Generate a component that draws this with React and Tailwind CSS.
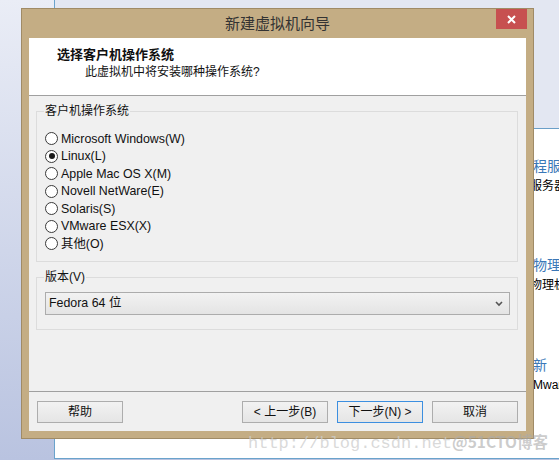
import React from 'react'

const OS_OPTIONS = [
  { label: 'Microsoft Windows(W)' },
  { label: 'Linux(L)', checked: true },
  { label: 'Apple Mac OS X(M)' },
  { label: 'Novell NetWare(E)' },
  { label: 'Solaris(S)' },
  { label: 'VMware ESX(X)' },
  { label: '其他(O)' },
]

function Radio({ label, checked }) {
  return (
    <div className="flex h-[17.5px] items-center">
      <span className="flex h-[13px] w-[13px] items-center justify-center rounded-full border border-[#3a3a3a] bg-white">
        {checked && <span className="h-[6px] w-[6px] rounded-full bg-[#1a1a1a]" />}
      </span>
      <span className="ml-[3px] text-[12.4px] leading-[14px] text-[#111]">{label}</span>
    </div>
  )
}

function GroupBox({ title, className, children }) {
  return (
    <div className={`relative mx-[7px] w-[482px] border border-[#dcdcdc] ${className}`}>
      <span className="absolute -top-[8px] left-[7px] bg-[#f0f0f0] px-[1px] text-[12px] leading-[14px] text-[#111]">
        {title}
      </span>
      {children}
    </div>
  )
}

function Button({ children, primary }) {
  return (
    <button
      type="button"
      className={`flex h-[22px] w-[86px] items-center justify-center border bg-gradient-to-b from-[#f2f2f2] to-[#e5e5e5] text-[12px] text-[#111] ${
        primary ? 'border-[#3c8fe0]' : 'border-[#adadad]'
      }`}
    >
      {children}
    </button>
  )
}

export default function App() {
  return (
    <div className="relative h-[460px] w-[559px] overflow-hidden bg-gradient-to-b from-[#eaedf6] to-[#b9c3e0] font-['Liberation_Sans','Noto_Sans_CJK_SC',sans-serif]">
      {/* web page behind the dialog */}
      <div className="absolute bottom-[1px] left-[54px] right-0 top-0 flex flex-col border-b border-l border-[#6aa3cc] bg-white">
        <div className="h-[129px] shrink-0 border-b border-[#6a9fc8] bg-[#e3e7f2]" />
        <div className="flex flex-col pl-[464px] whitespace-nowrap">
          <p className="mt-[27px] text-[14px] leading-[20px] text-[#3a78b8]">远程服务</p>
          <p className="-ml-[1px] text-[12px] leading-[20px] text-black">的服务器</p>
          <p className="mt-[59px] text-[14px] leading-[20px] text-[#3a78b8]">用物理机</p>
          <p className="-ml-[1px] text-[12px] leading-[20px] text-black">用物理机</p>
          <p className="mt-[60px] text-[14px] leading-[20px] text-[#3a78b8]">最新</p>
          <p className="ml-[6px] text-[12px] leading-[20px] text-black">VMware</p>
        </div>
      </div>

      {/* wizard dialog */}
      <div className="absolute left-[21px] top-[8px] flex h-[431px] w-[513px] flex-col border border-[#a08b66] bg-[#c4ad84] px-[7px] pb-[7px] pt-[29px]">
        <div className="absolute left-0 right-0 top-0 flex h-[29px] items-center justify-center font-['Noto_Sans_CJK_SC',sans-serif] text-[15px] text-[#333]">
          新建虚拟机向导
        </div>
        <div className="absolute right-[6px] top-0 flex h-[20px] w-[31px] items-center justify-center bg-[#c75050]">
          <svg width="9" height="9" viewBox="0 0 9 9">
            <path d="M1 1L8 8M8 1L1 8" stroke="white" strokeWidth="2" />
          </svg>
        </div>

        <div className="flex flex-1 flex-col bg-[#f0f0f0]">
          <div className="h-[57px] bg-white pl-[28px] pt-[7px]">
            <p className="font-['Noto_Sans_CJK_SC',sans-serif] text-[13px] font-bold leading-[18px] text-[#111]">
              选择客户机操作系统
            </p>
            <p className="pl-[28px] text-[12px] leading-[18px] text-[#111]">此虚拟机中将安装哪种操作系统?</p>
          </div>
          <div className="h-[1px] bg-[#a0a0a0]" />

          <div className="flex-1">
            <GroupBox title="客户机操作系统" className="mt-[15px] h-[151px] pl-[8px] pt-[18px]">
              {OS_OPTIONS.map((option) => (
                <Radio key={option.label} label={option.label} checked={option.checked} />
              ))}
            </GroupBox>

            <GroupBox title="版本(V)" className="mt-[15px] h-[53px] pl-[8px] pt-[14px]">
              <div className="flex h-[23px] w-[465px] items-center justify-between border border-[#acacac] bg-gradient-to-b from-[#f2f2f2] to-[#e4e4e4] pl-[3px] pr-[6px]">
                <span className="text-[12.4px] text-[#111]">Fedora 64 位</span>
                <svg width="8" height="6" viewBox="0 0 8 6">
                  <path d="M1 1L4 4L7 1" stroke="#555" strokeWidth="1.6" fill="none" />
                </svg>
              </div>
            </GroupBox>
          </div>

          <div className="h-[1px] bg-[#a0a0a0]" />
          <div className="flex h-[39px] items-start px-[8px] pt-[9px]">
            <Button>帮助</Button>
            <div className="flex-1" />
            <div className="flex gap-[9px]">
              <Button>&lt; 上一步(B)</Button>
              <Button primary>下一步(N) &gt;</Button>
              <Button>取消</Button>
            </div>
          </div>
        </div>
      </div>

      {/* watermark */}
      <div className="pointer-events-none absolute left-[248px] top-[430px] flex items-baseline whitespace-nowrap">
        <span className="font-['Liberation_Mono',monospace] text-[17px] text-[rgba(205,205,205,0.75)]">http://blog.csdn.net</span>
        <span className="font-['Noto_Sans_CJK_SC',sans-serif] text-[15.5px] font-bold text-[rgba(170,170,170,0.6)]">@51CTO博客</span>
      </div>
    </div>
  )
}
